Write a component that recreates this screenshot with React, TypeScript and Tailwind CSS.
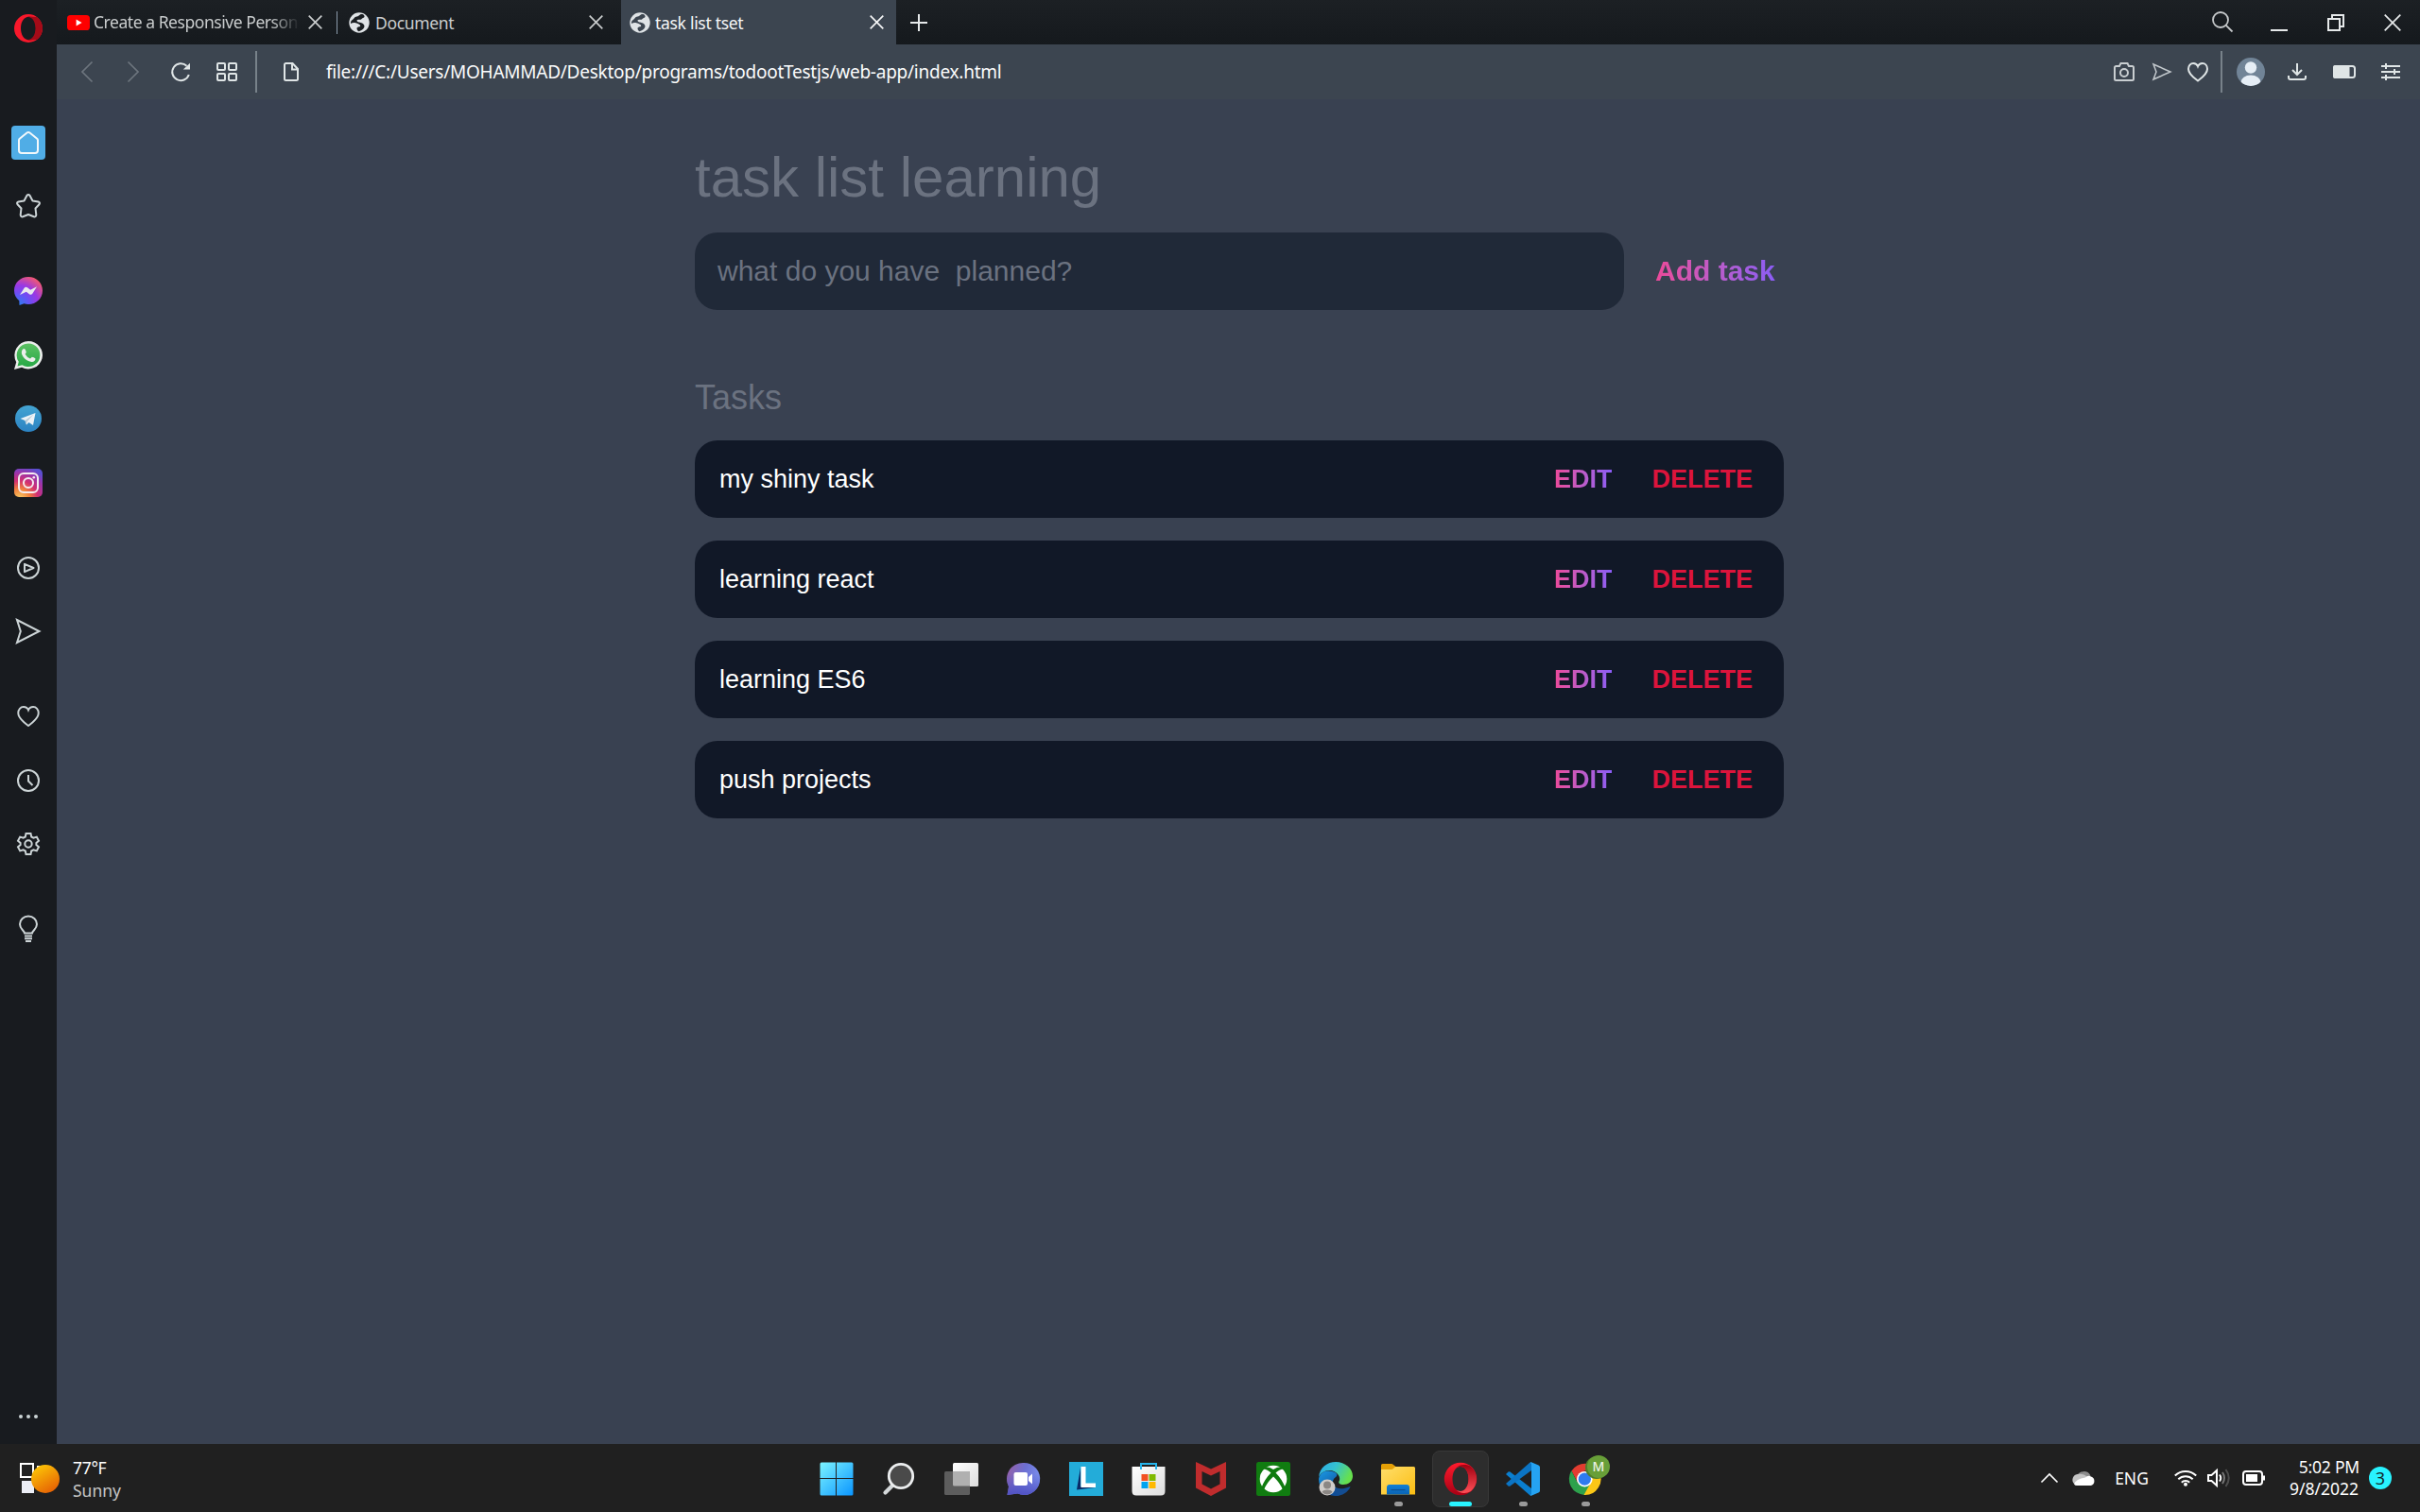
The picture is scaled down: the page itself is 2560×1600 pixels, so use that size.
import type { ReactNode } from "react";

const ui = "font-['Noto_Sans',sans-serif] whitespace-nowrap";

type SvgProps = { w: number; h: number; children: ReactNode; className?: string; sw?: number };

/* Stroked icon drawn on a canvas of exactly w x h units */
function Svg({ w, h, children, className = "", sw = 2 }: SvgProps) {
  return (
    <svg
      width={w}
      height={h}
      viewBox={`0 0 ${w} ${h}`}
      fill="none"
      stroke="currentColor"
      strokeWidth={sw}
      className={`shrink-0 overflow-visible ${className}`}
    >
      {children}
    </svg>
  );
}

const CloseX = ({ s, className = "" }: { s: number; className?: string }) => (
  <Svg w={s} h={s} sw={1.7} className={className}>
    <path d={`M.7 .7L${s - 0.7} ${s - 0.7}M${s - 0.7} .7L.7 ${s - 0.7}`} />
  </Svg>
);

const Globe = ({ dark }: { dark: string }) => (
  <Svg w={22} h={22} sw={0}>
    <circle cx="11" cy="11" r="10.7" fill="#dfe3e6" />
    <path
      d="M15 2.200C11 1.600 11.500 4.200 8.500 4.600C5.500 5 5.800 7 3.800 8C2.200 9 1.800 10.400 2 12C3.500 11 5.500 10.600 7.200 11.200C9.500 12 12 12.400 12.200 14.200C12.200 15.800 9.500 15 8.600 16.400C8.200 17.600 9 19.400 10.500 20.200C13 19.800 15.600 18 16.400 15.600C17 13 14.600 11.600 12.600 11C10.600 10.600 8.200 10.200 8.600 8.600C9 7.400 11.200 8 12.400 7.800C13.600 7.400 13.400 6.400 15 6C16.800 5.600 17.400 3.600 15 2.200Z"
      fill={dark}
    />
  </Svg>
);

/* ---------- Tab strip ---------- */

function TabStrip() {
  return (
    <div className="flex h-[47px] bg-gradient-to-b from-[#1c2024] to-[#15191d] text-[#c9cccd]">
      <div className="flex w-[297px] items-center pl-[11px] pr-[16px]">
        <Svg w={24} h={16} sw={0}>
          <rect width="24" height="16" rx="3.6" fill="#f00" />
          <path d="M9.600 4.400L15.600 8L9.600 11.600Z" fill="#fff" />
        </Svg>
        <div className="ml-1 w-[218px] overflow-hidden [mask-image:linear-gradient(to_right,#000_86%,transparent)]">
          <span className={`${ui} text-[17.5px] leading-[24px] tracking-[-0.45px]`}>Create a Responsive Person</span>
        </div>
        <CloseX s={15} className="ml-[9px]" />
      </div>
      <div className="flex w-[300px] items-center pr-[19px]">
        <div className="-ml-px h-6 w-px bg-[#8b9bab]" />
        <div className="ml-[12px]"><Globe dark="#191d21" /></div>
        <span className={`${ui} ml-[6px] text-[17.5px] leading-[24px] tracking-[-0.35px]`}>Document</span>
        <CloseX s={15} className="ml-auto" />
      </div>
      <div className="flex w-[291px] items-center bg-[#3c4550] pl-[9px] pr-[13px] text-[#f4f5f6]">
        <Globe dark="#3c4550" />
        <span className={`${ui} ml-[5px] text-[17.5px] leading-[24px] tracking-[-0.3px]`}>task list tset</span>
        <CloseX s={15} className="ml-auto" />
      </div>
      <div className="flex flex-1 items-center pl-[15px] pr-[20px] text-[#e6e9ea]">
        <Svg w={18} h={18}><path d="M9 0V18M0 9H18" /></Svg>
        <div className="ml-auto flex h-[22px] items-center">
          <Svg w={22} h={22} sw={1.8} className="text-[#c5c8ca]">
            <circle cx="9" cy="8" r="8" /><path d="M14.600 13.600L21.500 20.500" />
          </Svg>
          <Svg w={18} h={18} className="ml-[40px]"><path d="M0 17H18" /></Svg>
          <Svg w={18} h={18} className="ml-[42px]"><path d="M1 5H13V17H1ZM5 5V1H17V13H13" /></Svg>
          <CloseX s={18} className="ml-[42px]" />
        </div>
      </div>
    </div>
  );
}

/* ---------- Address bar ---------- */

const heart = "M11 19.500C7 16.500 1 12.500 1 7C1 3.400 3.400 1 6.200 1C8.600 1 10.200 2.200 11 4.200C11.800 2.200 13.400 1 15.800 1C18.600 1 21 3.400 21 7C21 12.500 15 16.500 11 19.500Z";

function AddressBar() {
  return (
    <div className="flex h-[58px] items-center bg-[#3c4550] pl-[26px] pr-[21px] text-[#dfe5e6]">
      <Svg w={12} h={22} className="text-[#6d757e]" sw={1.7}><path d="M11.500 .5L1 11L11.500 21.500" /></Svg>
      <Svg w={12} h={22} className="ml-[37px] text-[#6d757e]" sw={1.7}><path d="M.5 .5L11 11L.5 21.500" /></Svg>
      <Svg w={20} h={20} className="ml-[34px]">
        <path d="M18.800 13A9 9 0 1 1 16.500 3.700" />
        <path d="M20 .8V7.600H12.800Z" fill="currentColor" stroke="none" />
      </Svg>
      <Svg w={22} h={20} className="ml-[28px]">
        <rect x="1" y="1" width="8" height="7" rx="1" /><rect x="13" y="1" width="8" height="7" rx="1" />
        <rect x="1" y="12" width="8" height="7" rx="1" /><rect x="13" y="12" width="8" height="7" rx="1" />
      </Svg>
      <div className="ml-[19px] h-[44px] w-[2px] bg-[#78828a]" />
      <Svg w={16} h={20} className="ml-[28px]">
        <path d="M2 1H9.500L15 7V17.500A1.500 1.500 0 0 1 13.500 19H2.500A1.500 1.500 0 0 1 1 17.500V2.500A1.500 1.500 0 0 1 2.500 1M9 1V7.500H15" />
      </Svg>
      <span className={`${ui} ml-[29px] text-[19px] leading-[24px] tracking-[-0.25px] text-[#fbfcfc]`}>
        file:///C:/Users/MOHAMMAD/Desktop/programs/todootTestjs/web-app/index.html
      </span>
      <div className="ml-auto flex items-center">
        <Svg w={22} h={20} className="text-[#c9ced1]">
          <path d="M2.500 4H6L7.500 1H14.500L16 4H19.500A1.500 1.500 0 0 1 21 5.500V17.500A1.500 1.500 0 0 1 19.500 19H2.500A1.500 1.500 0 0 1 1 17.500V5.500A1.500 1.500 0 0 1 2.500 4Z" />
          <circle cx="11" cy="11" r="4" />
        </Svg>
        <Svg w={20} h={18} className="ml-[19px] text-[#c2c8cc]" sw={1.5}><path d="M1 1L19 9L1 17L4 9Z" /></Svg>
        <Svg w={22} h={20} className="ml-[17px]"><path d={heart} /></Svg>
        <div className="ml-[13px] h-[44px] w-[2px] bg-[#78828a]" />
        <Svg w={30} h={30} className="ml-[15px]" sw={0}>
          <defs><clipPath id="avatar"><circle cx="15" cy="15" r="15" /></clipPath></defs>
          <g clipPath="url(#avatar)">
            <rect width="30" height="30" fill="#718497" />
            <circle cx="15" cy="10.500" r="6.200" fill="#e6eef6" />
            <ellipse cx="15" cy="26" rx="10.500" ry="7.500" fill="#e6eef6" />
          </g>
        </Svg>
        <Svg w={20} h={18} className="ml-[24px]">
          <path d="M10 0V11.500M5 7L10 12L15 7M1 13V15A2 2 0 0 0 3 17H17A2 2 0 0 0 19 15V13" />
        </Svg>
        <Svg w={24} h={14} className="ml-[28px]">
          <rect x="1" y="1" width="22" height="12" rx="2.500" /><rect x="1" y="1" width="15.500" height="12" rx="1" fill="currentColor" />
        </Svg>
        <Svg w={20} h={18} className="ml-[27px]">
          <path d="M0 3H20M0 9H20M0 15H20" /><path d="M5 0V6M14 6V12M5 12V18" />
        </Svg>
      </div>
    </div>
  );
}

/* ---------- Sidebar ---------- */

function Slot({ mt, children }: { mt: string; children: ReactNode }) {
  return <div className={`flex h-9 w-9 shrink-0 items-center justify-center ${mt}`}>{children}</div>;
}

function Sidebar() {
  return (
    <div className="flex h-[1528px] w-[60px] shrink-0 flex-col items-center bg-[#181b1f] text-[#ccd4d6]">
      <Slot mt="mt-3">
        <Svg w={30} h={30} sw={0}>
          <path fillRule="evenodd" fill="#f9182b" d="M15 0A15 15 0 1 1 15 30A15 15 0 1 1 15 0ZM15.500 2.800C10.500 2.800 7 8 7 15S10.500 27.200 15.500 27.200S23 22 23 15S20 2.800 15.500 2.800Z" />
          <path fill="#a40b18" d="M13 3.200C17 1.800 20.500 3.400 24 3A15 15 0 0 1 24 27C20 27 17 28.600 13 26.800C19 28 22.500 22 22.500 15S19 2 13 3.200Z" />
        </Svg>
      </Slot>
      <Slot mt="mt-[85px]">
        <div className="flex h-9 w-9 items-center justify-center rounded-[4px] bg-[#50ade6] text-[#f3f8fb]">
          <Svg w={22} h={24}><path d="M1 9.500Q1 8.500 1.800 7.800L9.500 1.500Q11 .4 12.500 1.500L20.200 7.800Q21 8.500 21 9.500V20A3 3 0 0 1 18 23H4A3 3 0 0 1 1 20Z" /></Svg>
        </div>
      </Slot>
      <Slot mt="mt-[31px]">
        <Svg w={26} h={26}>
          <path strokeLinejoin="round" d="M11.400 2Q13 .2 14.600 2L17.500 7.500L23.500 8.500Q25.800 9.400 24.500 11.300L20.500 15.500L21.300 22.300Q21 24.800 18.800 24.300L13 22L7.200 24.300Q5 24.800 4.700 22.300L5.500 15.500L1.500 11.300Q.2 9.400 2.500 8.500L8.500 7.500Z" />
        </Svg>
      </Slot>
      <Slot mt="mt-[54px]">
        <Svg w={30} h={30} sw={0}>
          <defs>
            <radialGradient id="msg" cx="0.15" cy="1" r="1.150">
              <stop offset="0" stopColor="#2a80f0" /><stop offset=".35" stopColor="#6a50f5" />
              <stop offset=".62" stopColor="#9a38e4" /><stop offset="1" stopColor="#fb5c66" />
            </radialGradient>
          </defs>
          <path fill="url(#msg)" d="M15 0C23.500 0 30 6.200 30 14.500S23.500 29 15 29C13.300 29 12 28.800 10.500 28.300L5.500 30L5.300 25.300C2 22.500 0 19 0 14.500C0 6.200 6.500 0 15 0Z" />
          <path fill="#e9e9ee" d="M6 19L10.500 12Q12 10 14 11.300L17.200 13.800L24 10.200L19.500 17.500Q18 19.500 16 18.200L12.800 15.800Z" />
        </Svg>
      </Slot>
      <Slot mt="mt-8">
        <Svg w={30} h={30} sw={0}>
          <defs><linearGradient id="wa" x2="0" y2="1"><stop stopColor="#5cc163" /><stop offset="1" stopColor="#27a846" /></linearGradient></defs>
          <path fill="#eceeec" d="M15 0A15 14.700 0 1 1 8 27.700L0 30L2.200 22.200A15 15 0 0 1 15 0Z" />
          <path fill="url(#wa)" d="M15 2.500A12.300 12.300 0 1 1 8.500 25.200L3.500 26.500L4.800 21.700A12.300 12.300 0 0 1 15 2.500Z" />
          <path fill="#eceeec" d="M9.500 8.200Q11 7.500 11.800 9L12.800 11.500Q12.800 12.600 11.600 13.800Q13.500 17.200 17 18.600L18.800 16.800Q21 17 22.500 18.600C22.500 21 20.500 22.200 18.500 22C13 21.300 8 16.500 7.800 12Q7.800 9.500 9.500 8.200Z" />
        </Svg>
      </Slot>
      <Slot mt="mt-[31px]">
        <Svg w={28} h={28} sw={0}>
          <defs><linearGradient id="tg" x2="0" y2="1"><stop stopColor="#44a5d3" /><stop offset="1" stopColor="#2b82c2" /></linearGradient></defs>
          <circle cx="14" cy="14" r="14" fill="url(#tg)" />
          <path fill="#edf3f7" d="M5.500 14L21.500 8L19 21L14.500 18L12 20.500L10.500 16Z" />
          <path fill="#b9cbd8" d="M10.500 16L19.500 9.500L12.800 17L12 20.500Z" />
        </Svg>
      </Slot>
      <Slot mt="mt-8">
        <Svg w={30} h={30}>
          <defs>
            <radialGradient id="ig" cx=".2" cy="1.050" r="1.150">
              <stop offset="0" stopColor="#f8cf66" /><stop offset=".3" stopColor="#f0803c" />
              <stop offset=".55" stopColor="#d22f72" /><stop offset=".8" stopColor="#9a35ad" /><stop offset="1" stopColor="#5b4fd0" />
            </radialGradient>
          </defs>
          <rect width="30" height="30" rx="5" fill="url(#ig)" stroke="none" />
          <rect x="5" y="5" width="20" height="20" rx="5" stroke="#f5ecf0" />
          <circle cx="15" cy="15" r="5" stroke="#f5ecf0" /><circle cx="20.800" cy="9.200" r="1.300" fill="#f5ecf0" stroke="none" />
        </Svg>
      </Slot>
      <Slot mt="mt-[54px]">
        <Svg w={24} h={24}><circle cx="12" cy="12" r="11" /><path strokeLinejoin="round" d="M8 7.800L17.500 12L8 16.200Z" /></Svg>
      </Slot>
      <Slot mt="mt-[31px]">
        <Svg w={26} h={26}><path d="M1 1L24.500 13L1 25L4.800 13Z" /></Svg>
      </Slot>
      <Slot mt="mt-[54px]">
        <svg width="24" height="22" viewBox="0 0 22 20.500" fill="none" stroke="currentColor" strokeWidth="1.8"><path d={heart} /></svg>
      </Slot>
      <Slot mt="mt-8">
        <Svg w={24} h={24}><circle cx="12" cy="12" r="11" /><path d="M12 6V12.500L16.500 17" /></Svg>
      </Slot>
      <Slot mt="mt-[31px]">
        <Svg w={24} h={24}>
          <path d="M9.500 1H14.500L15.200 4.500L17.400 5.700L20.800 4.600L23 8.800L20.400 11V13L23 15.200L20.800 19.400L17.400 18.300L15.200 19.500L14.500 23H9.500L8.800 19.500L6.600 18.300L3.200 19.400L1 15.200L3.600 13V11L1 8.800L3.200 4.600L6.600 5.700L8.800 4.500Z" />
          <circle cx="12" cy="12" r="3.700" />
        </Svg>
      </Slot>
      <Slot mt="mt-[54px]">
        <Svg w={20} h={28}>
          <path d="M6 18.500C5.500 15.500 1 14 1 9A9 8.500 0 0 1 19 9C19 14 14.500 15.500 14 18.500ZM6 21.500H14M6 24.200H14M7 27H13" />
        </Svg>
      </Slot>
      <div className="mb-[27px] mt-auto flex gap-1">
        <i className="h-1 w-1 rounded-full bg-current" /><i className="h-1 w-1 rounded-full bg-current" /><i className="h-1 w-1 rounded-full bg-current" />
      </div>
    </div>
  );
}

/* ---------- Task list page ---------- */

const tasks = ["my shiny task", "learning react", "learning ES6", "push projects"];
const gradient = "bg-gradient-to-r from-[#ec4899] to-[#8b5cf6] bg-clip-text text-transparent";

function TaskPage() {
  return (
    <main className="flex flex-1 flex-col items-center bg-[#394151] pl-[2px] pt-[53px] font-['Liberation_Sans',Arial,sans-serif]">
      <div className="w-[1152px]">
        <h1 className="h-[60px] text-[60px] leading-[60px] text-[#6b7280]">task list learning</h1>
        <div className="mt-[28px] flex h-[82px] items-center">
          <div className="flex h-full w-[983px] items-center whitespace-pre rounded-[24px] bg-[#202938] pb-[2px] pl-6 text-[30px] text-[#6b7280]">
            {"what do you have  planned?"}
          </div>
          <button className={`mb-[2px] ml-[33px] text-[30px] font-bold ${gradient}`}>Add task</button>
        </div>
        <h2 className="mt-[75px] text-[36px] leading-[36px] text-[#6b7280]">Tasks</h2>
        <div className="mt-[27px] flex flex-col gap-6">
          {tasks.map((t) => (
            <div key={t} className="flex h-[82px] items-center rounded-[24px] bg-[#111827] pl-[26px] pr-[33px] text-[27px]">
              <span className="text-white">{t}</span>
              <button className={`ml-auto font-bold ${gradient}`}>EDIT</button>
              <button className="ml-[42px] font-bold text-[#dc143c]">DELETE</button>
            </div>
          ))}
        </div>
      </div>
    </main>
  );
}

/* ---------- Taskbar ---------- */

function TaskbarApp({ children, dot, active }: { children: ReactNode; dot?: boolean; active?: boolean }) {
  return (
    <div className={`relative mx-[3px] flex h-[60px] w-[60px] shrink-0 items-center justify-center rounded-lg ${active ? "border border-[#383838] bg-[#2d2d2d]" : ""}`}>
      {children}
      {dot && <i className="absolute bottom-[1px] h-[5px] w-[9px] rounded-full bg-[#9a9a9a]" />}
      {active && <i className="absolute bottom-0 h-[5px] w-6 rounded-full bg-[#28f3ff]" />}
    </div>
  );
}

function Taskbar() {
  return (
    <div className="grid h-[72px] grid-cols-[852px_858px_1fr] items-center bg-[#202020] text-white">
      <div className="flex items-center pl-5">
        <Svg w={43} h={34} sw={0}>
          <defs>
            <linearGradient id="sun" x1=".2" y1="0" x2=".8" y2="1"><stop stopColor="#fdc806" /><stop offset="1" stopColor="#e55c04" /></linearGradient>
          </defs>
          <rect x="2" y="2" width="13" height="14" fill="none" stroke="#fff" strokeWidth="2" />
          <rect x="3" y="20" width="13" height="13" fill="#eceef6" /><rect x="19" y="4" width="8" height="6" fill="#fff" />
          <circle cx="28" cy="18" r="15" fill="url(#sun)" />
        </Svg>
        <div className={`${ui} ml-[14px] pt-px text-[17.5px] leading-[24px]`}>
          <div className="tracking-[-0.3px]">77°F</div>
          <div className="text-[#c6c6c6]">Sunny</div>
        </div>
      </div>
      <div className="flex items-center pt-[2px]">
        <TaskbarApp>
          <Svg w={36} h={36} sw={0}>
            <defs><linearGradient id="win" x2="1" y2="1"><stop stopColor="#7cf4ff" /><stop offset="1" stopColor="#0a95ff" /></linearGradient></defs>
            <path fill="url(#win)" d="M2 .5H17V17H.5V2Q.5 .5 2 .5ZM18 .5H34Q35.500 .5 35.500 2V17H18ZM.5 18H17V35.500H2Q.5 35.500 .5 34ZM18 18H35.500V34Q35.500 35.500 34 35.500H18Z" />
          </Svg>
        </TaskbarApp>
        <TaskbarApp>
          <Svg w={36} h={36}>
            <path d="M3.500 32.500L11 25" stroke="#d4d8da" strokeWidth="4.200" strokeLinecap="round" />
            <circle cx="20" cy="15" r="12.700" fill="#4a4a4a" stroke="#eceeef" strokeWidth="2.800" />
          </Svg>
        </TaskbarApp>
        <TaskbarApp>
          <Svg w={36} h={36} sw={0}>
            <defs><linearGradient id="tv" x2="1" y2="1"><stop stopColor="#fff" /><stop offset="1" stopColor="#dcdcdc" /></linearGradient></defs>
            <rect x="9" y="1" width="27" height="25" rx="1.500" fill="url(#tv)" />
            <rect x="0" y="10" width="27" height="25" rx="1.500" fill="#5d5d5d" />
            <path d="M9 10H27V25.500H10.500Q9 25.500 9 24Z" fill="#b0b0b0" />
          </Svg>
        </TaskbarApp>
        <TaskbarApp>
          <Svg w={36} h={36} sw={0}>
            <defs><linearGradient id="chat" x1="0" y1=".2" x2="1" y2=".5"><stop stopColor="#9560a8" /><stop offset=".5" stopColor="#6c6fd2" /><stop offset="1" stopColor="#7b90ee" /></linearGradient>
            <linearGradient id="chat2" x2="0" y2="1"><stop offset=".35" stopColor="#5256c8" stopOpacity="0" /><stop offset="1" stopColor="#5052c4" /></linearGradient></defs>
            {["url(#chat)", "url(#chat2)"].map((f) => (
              <path key={f} fill={f} d="M17.500 1A17 17 0 1 1 11.500 33.600L.5 35L2 26A17 17 0 0 1 17.500 1Z" />
            ))}
            <rect x="7.500" y="11" width="14.500" height="14" rx="2" fill="#fff" /><path d="M23 16L27 12.500V23.500L23 20Z" fill="#fff" />
          </Svg>
        </TaskbarApp>
        <TaskbarApp>
          <Svg w={36} h={36} sw={0}>
            <rect width="36" height="36" fill="#23acd9" />
            <path d="M12 6L8 29.500L28 27L12 26Z" fill="#0a2a66" />
            <path d="M12.500 5H17.500V22.500H28V27H12.500Z" fill="#fff" />
          </Svg>
        </TaskbarApp>
        <TaskbarApp>
          <Svg w={36} h={36} sw={0}>
            <path d="M1 5Q.5 5 .5 5.500V31Q.5 35.500 5 35.500H31Q35.500 35.500 35.500 31V5.500Q35.500 5 35 5Z" fill="url(#tv)" />
            <path d="M10 8V2H26V8" fill="none" stroke="#26b5ec" strokeWidth="2" />
            <path d="M10.500 13H17.500V20H10.500Z" fill="#f25022" /><path d="M18.500 13H25.500V20H18.500Z" fill="#7fba00" />
            <path d="M10.500 21H17.500V28H10.500Z" fill="#00a4ef" /><path d="M18.500 21H25.500V28H18.500Z" fill="#ffb900" />
          </Svg>
        </TaskbarApp>
        <TaskbarApp>
          <Svg w={36} h={36} sw={0}>
            <path fillRule="evenodd" fill="#c02c2d" d="M2 0L18 7.500L34 0V27.500L18 36L2 27.500ZM8.500 10V23.500L18 28.500L27.500 23.500V10L18 14.500Z" />
          </Svg>
        </TaskbarApp>
        <TaskbarApp>
          <Svg w={36} h={36} sw={0}>
            <rect width="36" height="36" rx="2.500" fill="#107c10" />
            <circle cx="18" cy="18" r="14.300" fill="#fff" />
            <path fill="#107c10" d="M8.500 5.500Q13 4.500 18 8Q23 4.500 27.500 5.500L29 7.500Q25 7.500 20.500 11.500Q27 18 30.500 27L28 29.500Q25 22 18 15.500Q11 22 8 29.500L5.500 27Q9 18 15.500 11.500Q11 7.500 7 7.500Z" />
          </Svg>
        </TaskbarApp>
        <TaskbarApp>
          <Svg w={36} h={36} sw={0}>
            <defs>
              <linearGradient id="e1" x2="1" y2=".4"><stop stopColor="#2ba8e8" /><stop offset=".5" stopColor="#35c2d0" /><stop offset="1" stopColor="#66e04e" /></linearGradient>
              <linearGradient id="e2" x2=".6" y2="1"><stop stopColor="#1b9be6" /><stop offset="1" stopColor="#0e4c96" /></linearGradient>
            </defs>
            <path fill="#134d92" d="M13 17C12 25 19 29.500 27 28C30 27.400 33 25.500 33.500 26.500C31 32 25 36 18 36C10 34 5 26 13 17Z" />
            <path fill="url(#e2)" d="M0 18C1 11 8 8 14 10C19 11 21 14 18 16C12 20 14 32 22 35.500C9 38 0 29 0 18Z" />
            <path fill="url(#e1)" d="M0 16C1 6 9 0 18 0C28 0 36 7 36 15C36 21 31 24 26 24C22.500 24 20.500 22.500 21.500 20.500C24 17 20 9 11 9C6 9 2 12 0 16Z" />
            <circle cx="9" cy="27" r="8.500" fill="#cfccc9" /><circle cx="9" cy="24.500" r="4" fill="#8b8784" /><path d="M3.500 32Q4 29.500 9 29.500T14.500 32Q9 37 3.500 32Z" fill="#8b8784" />
          </Svg>
        </TaskbarApp>
        <TaskbarApp dot>
          <Svg w={36} h={36} sw={0}>
            <defs>
              <linearGradient id="f1" x2="1" y2="1"><stop stopColor="#ffdf6c" /><stop offset="1" stopColor="#fbbd12" /></linearGradient>
              <linearGradient id="f2" x2="0" y2="1"><stop stopColor="#0f7fd6" /><stop offset="1" stopColor="#0a64b4" /></linearGradient>
            </defs>
            <path fill="#e5a006" d="M0 3.500Q0 2 1.500 2H11Q12 2 13 3L15.500 5V10H0Z" />
            <path fill="url(#f1)" d="M0 8H11Q12 8 13 7L15 5H34.500Q36 5 36 6.500V34.500H0Z" />
            <path fill="url(#f2)" d="M6 34.500V27Q6 24 9 24H27Q30 24 30 27V34.500Z" /><path fill="#0a4f94" d="M10.500 29H25.500V30.200H10.500Z" />
          </Svg>
        </TaskbarApp>
        <TaskbarApp active>
          <Svg w={36} h={36} sw={0}>
            <defs>
              <linearGradient id="o1" x2="0" y2="1"><stop stopColor="#ff1b2d" /><stop offset="1" stopColor="#a70014" /></linearGradient>
              <linearGradient id="o2" x2="0" y2="1"><stop stopColor="#a00010" /><stop offset="1" stopColor="#ff5058" /></linearGradient>
            </defs>
            <path fillRule="evenodd" fill="url(#o1)" d="M18 .8A17.200 17.200 0 1 1 18 35.200A17.200 17.200 0 1 1 18 .8ZM18 5C12.500 5 9.500 11 9.500 18S12.500 31 18 31S26.500 25 26.500 18S23.500 5 18 5Z" />
            <path fill="url(#o2)" d="M13 6.500C17 2.500 24 2 29 5A17.200 17.200 0 0 1 29 31C24 34 17 33.500 13 29.500C21 34 26.500 27 26.500 18S21 2 13 6.500Z" />
          </Svg>
        </TaskbarApp>
        <TaskbarApp dot>
          <Svg w={36} h={36} sw={0}>
            <path fill="#0a7fd0" d="M0 13L2.500 10.500Q3.500 10 4.500 10.500L27 28V35.500L25 35Z" />
            <path fill="#0b74c4" d="M0 23L2.500 25.500Q3.500 26 4.500 25.500L27 9V.5L25 1Z" />
            <path fill="#25a3f2" d="M25.500 .6Q26.300 0 27.500 .4L34.500 3.500Q36 4.300 36 5.500V30.500Q36 31.800 34.500 32.500L27.500 35.600Q26.300 36 25.500 35.400L27 34V2Z" />
          </Svg>
        </TaskbarApp>
        <TaskbarApp dot>
          <Svg w={36} h={36} sw={0}>
            <path fill="#e23c30" d="M3.500 9.500A17 17 0 0 1 32 9.500H17L10 22Z" />
            <path fill="#2da14c" d="M3.300 9.200A17 17 0 0 0 17 35L24.500 22L9.500 21.500Z" />
            <path fill="#fbc716" d="M32.200 9.500A17 17 0 0 1 16.500 35L24.800 20L24 9.500Z" />
            <circle cx="17.300" cy="18.200" r="8.300" fill="#fff" /><circle cx="17.300" cy="18.200" r="6.600" fill="#2f7bf0" />
          </Svg>
          <div className="absolute left-[30px] top-[6px] h-6 w-6 rounded-full bg-[#4f7d2c]" />
          <div className={`${ui} absolute left-[32px] top-[5px] flex h-6 w-6 items-center justify-center rounded-full bg-[#689f38] text-[14px] font-medium leading-none text-[#edf3e6]`}>M</div>
        </TaskbarApp>
      </div>
      <div className="flex items-center justify-end pr-[30px]">
        <Svg w={18} h={10} sw={1.6}><path d="M.5 9.500L9 1L17.500 9.500" /></Svg>
        <Svg w={24} h={16} sw={0} className="ml-[15px]">
          <path fill="#8c8c8c" d="M5 6A8 8 0 0 1 19.500 5.500L16 10H5Z" />
          <path fill="#c4c4c4" d="M5.500 4A6 6 0 0 0 2 14L9 13L16 7Q12 3 5.500 4Z" />
          <path fill="#fff" d="M2 14.500Q4 9 14 7.500Q17 4.500 20 6.500A5 5 0 0 1 20 16H5Q3 16 2 14.500Z" />
        </Svg>
        <span className={`${ui} ml-[21px] text-[17.5px] leading-[24px]`}>ENG</span>
        <Svg w={24} h={18} className="ml-[27px]" sw={2}>
          <path d="M.8 6.500A16 16 0 0 1 23.200 6.500M4.300 10.300A11 11 0 0 1 19.700 10.300M7.800 13.800A6 6 0 0 1 16.200 13.800" /><circle cx="12" cy="15.800" r="2" fill="#fff" stroke="none" />
        </Svg>
        <Svg w={25} h={20} className="ml-[11px]">
          <path d="M1 7H4.500L10 2V18L4.500 13H1Z" /><path d="M13 6.500Q15.500 10 13 13.500" />
          <path stroke="#777" d="M16 4Q20 10 16 16" /><path stroke="#4d4d4d" d="M19.500 1Q26 10 19.500 19" />
        </Svg>
        <Svg w={24} h={16} className="ml-[12px]">
          <rect x="1" y="1" width="20" height="14" rx="3" /><rect x="4" y="4" width="12" height="8" fill="#fff" stroke="none" /><path d="M23 5.500V10.500" />
        </Svg>
        <div className={`${ui} ml-[26px] text-right text-[17.5px] leading-[23px]`}>
          <div className="-mr-px tracking-[-0.2px]">5:02 PM</div>
          <div>9/8/2022</div>
        </div>
        <div className={`${ui} ml-[11px] flex h-6 w-6 items-center justify-center rounded-full bg-[#28f3ff] text-[18px] leading-none text-[#12282a]`}>3</div>
      </div>
    </div>
  );
}

export default function App() {
  return (
    <div className="h-[1600px] w-[2560px] overflow-hidden bg-[#394151]">
      <div className="flex h-[1528px]">
        <Sidebar />
        <div className="flex flex-1 flex-col">
          <TabStrip />
          <AddressBar />
          <TaskPage />
        </div>
      </div>
      <Taskbar />
    </div>
  );
}
